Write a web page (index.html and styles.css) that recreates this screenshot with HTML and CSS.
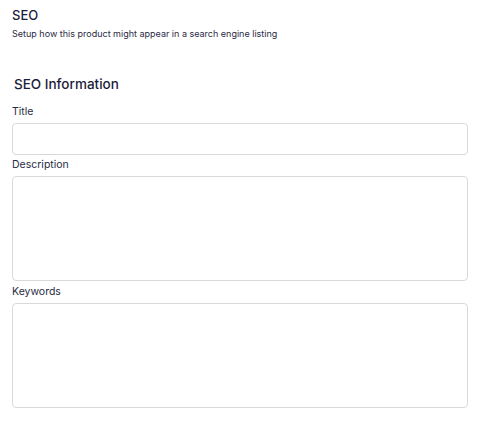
FILE: index.html
```html
<!DOCTYPE html>
<html lang="en">
<head>
  <meta charset="UTF-8">
  <meta name="viewport" content="width=device-width, initial-scale=1.0">
  <title>Product SEO</title>
  <link rel="stylesheet" href="styles.css">
</head>
<body>
  <div class="container">
    <h1 class="page-title">SEO</h1>
    <p class="page-subtitle">Setup how this product might appear in a search engine listing</p>

    <h2 class="section-title">SEO Information</h2>

    <div class="field">
      <label for="seo-title">Title</label>
      <input type="text" id="seo-title" class="title-input" />
    </div>
    <div class="field">
      <label for="seo-description">Description</label>
      <textarea id="seo-description"></textarea>
    </div>
    <div class="field">
      <label for="seo-keywords">Keywords</label>
      <textarea id="seo-keywords"></textarea>
    </div>
  </div>
</body>
</html>
```

FILE: styles.css
```css
body {
  font-family: Inter, "Noto Sans", sans-serif;
  background-color: #ffffff;
  color: #1c1d3a;
  margin: 0;
}
.container {
  padding: 7px 11px 0 12px;
}
.page-title {
  font-size: 13px;
  font-weight: 500;
  line-height: 16px;
  margin: 0;
}
.page-subtitle {
  font-size: 9px;
  line-height: 12px;
  margin: 5px 0 0 0;
  color: #2a2b44;
}
.section-title {
  font-size: 13.5px;
  font-weight: 500;
  line-height: 18px;
  margin: 35px 0 0 2px;
}
.field {
  display: flex;
  flex-direction: column;
  gap: 4px;
  margin-top: 3px;
}
.field:first-of-type {
  margin-top: 12px;
}
.field:last-child {
  margin-top: 4px;
}
.field label {
  font-size: 10.5px;
  line-height: 14px;
  color: #2a2b44;
}
.field input,
.field textarea {
  box-sizing: border-box;
  width: 100%;
  margin: 0;
  border: 1px solid #d9d9d9;
  border-radius: 4px;
  background: #ffffff;
  font-family: inherit;
  font-size: 12px;
  padding: 6px 8px;
}
.title-input {
  height: 32px;
}
.field textarea {
  height: 105px;
  resize: none;
}
```
